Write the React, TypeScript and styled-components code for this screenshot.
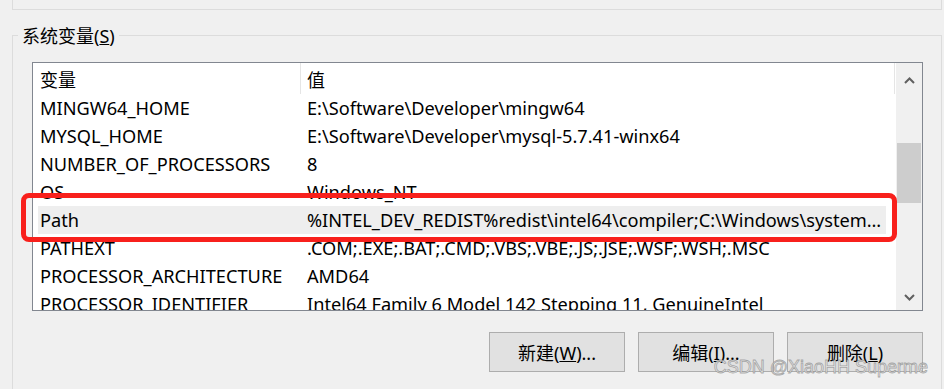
import styled, { createGlobalStyle } from 'styled-components';

const GlobalStyle = createGlobalStyle`
  html,
  body {
    margin: 0;
    padding: 0;
    background: #f0f0f0;
  }
`;

interface EnvVar {
  name: string;
  value: string;
}

const rows: EnvVar[] = [
  { name: 'MINGW64_HOME', value: 'E:\\Software\\Developer\\mingw64' },
  { name: 'MYSQL_HOME', value: 'E:\\Software\\Developer\\mysql-5.7.41-winx64' },
  { name: 'NUMBER_OF_PROCESSORS', value: '8' },
  { name: 'OS', value: 'Windows_NT' },
  {
    name: 'Path',
    value:
      '%INTEL_DEV_REDIST%redist\\intel64\\compiler;C:\\Windows\\system32;C:\\Windows;C:\\Windows\\System32\\Wbem',
  },
  { name: 'PATHEXT', value: '.COM;.EXE;.BAT;.CMD;.VBS;.VBE;.JS;.JSE;.WSF;.WSH;.MSC' },
  { name: 'PROCESSOR_ARCHITECTURE', value: 'AMD64' },
  { name: 'PROCESSOR_IDENTIFIER', value: 'Intel64 Family 6 Model 142 Stepping 11, GenuineIntel' },
];

const Page = styled.div`
  position: relative;
  width: 944px;
  height: 389px;
  overflow: hidden;
  background: #f0f0f0;
  color: #000;
  font-family: 'Noto Sans', 'Noto Sans CJK SC', sans-serif;
  font-size: 18px;
`;

const TopPanel = styled.div`
  box-sizing: border-box;
  height: 10px;
  margin: 0 2px 0 12px;
  border: 1px solid #dcdcdc;
  border-top: none;
`;

const Group = styled.section`
  position: relative;
  height: 400px;
  margin: 25px 2px 0 12px;
  padding: 26px 18px 0 19px;
  border: 1px solid #dcdcdc;
  border-bottom: none;
`;

const GroupLabel = styled.span`
  position: absolute;
  top: -12px;
  left: 5px;
  padding: 0 4px;
  line-height: 24px;
  background: #f0f0f0;
`;

const ListView = styled.div`
  box-sizing: border-box;
  display: grid;
  grid-template-columns: 1fr 26px;
  height: 249px;
  border: 1px solid #828790;
  background: #fff;
  font-size: 18.2px;
`;

const ListContent = styled.div`
  display: flex;
  flex-direction: column;
  overflow: hidden;
  min-width: 0;
`;

const Header = styled.div`
  display: grid;
  grid-template-columns: 268px 594px;
  height: 31px;
  flex-shrink: 0;
  font-size: 18px;
`;

const HeaderCell = styled.div<{ $pad: number }>`
  display: flex;
  align-items: center;
  padding-left: ${(p) => p.$pad}px;
  border-right: 1px solid #e5e5e5;
`;

const Row = styled.div<{ $selected?: boolean }>`
  display: grid;
  grid-template-columns: 262px minmax(0, 1fr);
  align-items: center;
  flex-shrink: 0;
  height: 28px;
  width: 848px;
  margin-left: 5px;
  background: ${(p) => (p.$selected ? '#eeeeee' : 'transparent')};
`;

const NameCell = styled.span`
  padding-left: 2px;
  white-space: nowrap;
`;

const ValueCell = styled.span`
  padding: 0 0 0 7px;
  white-space: nowrap;
  overflow: hidden;
  text-overflow: ellipsis;
`;

const ScrollBar = styled.div`
  display: flex;
  flex-direction: column;
  background: #f0f0f0;
`;

const ScrollBtn = styled.div<{ $h: number }>`
  display: grid;
  place-items: center;
  height: ${(p) => p.$h}px;
  flex-shrink: 0;
`;

const Track = styled.div`
  flex: 1;
`;

const Thumb = styled.div`
  width: 24px;
  height: 60px;
  margin-left: 1px;
  background: #cdcdcd;
`;

const ButtonRow = styled.div`
  display: flex;
  justify-content: flex-end;
  gap: 13px;
  margin-top: 21px;
`;

const Button = styled.button`
  box-sizing: border-box;
  width: 136px;
  height: 40px;
  padding: 0;
  border: 1px solid #adadad;
  background: #e1e1e1;
  color: #000;
  font: inherit;
`;

const RedBox = styled.div`
  position: absolute;
  left: 21px;
  top: 193px;
  box-sizing: border-box;
  width: 876px;
  height: 49px;
  border: 5px solid #f8201c;
  border-radius: 8px;
  pointer-events: none;
`;

const Watermark = styled.div`
  position: absolute;
  top: 357px;
  right: 16px;
  font-family: 'Liberation Sans', Arial, sans-serif;
  font-size: 18px;
  line-height: 20px;
  color: rgba(235, 235, 235, 0.85);
  -webkit-text-stroke: 0.8px rgba(120, 120, 120, 0.6);
  white-space: nowrap;
`;

function Chevron({ down }: { down?: boolean }) {
  return (
    <svg width="11" height="7" viewBox="0 0 11 7">
      <polyline
        points={down ? '1,1 5.5,5.5 10,1' : '1,6 5.5,1.5 10,6'}
        fill="none"
        stroke="#606060"
        strokeWidth="2"
      />
    </svg>
  );
}

export default function App() {
  const thumbTop = 46;
  return (
    <Page>
      <GlobalStyle />
      <TopPanel />
      <Group>
        <GroupLabel>
          系统变量(<u>S</u>)
        </GroupLabel>
        <ListView>
          <ListContent>
            <Header>
              <HeaderCell $pad={7}>变量</HeaderCell>
              <HeaderCell $pad={6}>值</HeaderCell>
            </Header>
            {rows.map((r) => (
              <Row key={r.name} $selected={r.name === 'Path'}>
                <NameCell>{r.name}</NameCell>
                <ValueCell>{r.value}</ValueCell>
              </Row>
            ))}
          </ListContent>
          <ScrollBar>
            <ScrollBtn $h={34}>
              <Chevron />
            </ScrollBtn>
            <Track>
              <Thumb style={{ marginTop: thumbTop }} />
            </Track>
            <ScrollBtn $h={26}>
              <Chevron down />
            </ScrollBtn>
          </ScrollBar>
        </ListView>
        <ButtonRow>
          <Button type="button">
            新建(<u>W</u>)...
          </Button>
          <Button type="button">
            编辑(<u>I</u>)...
          </Button>
          <Button type="button">
            删除(<u>L</u>)
          </Button>
        </ButtonRow>
      </Group>
      <RedBox />
      <Watermark>CSDN @XiaoHH Superme</Watermark>
    </Page>
  );
}
